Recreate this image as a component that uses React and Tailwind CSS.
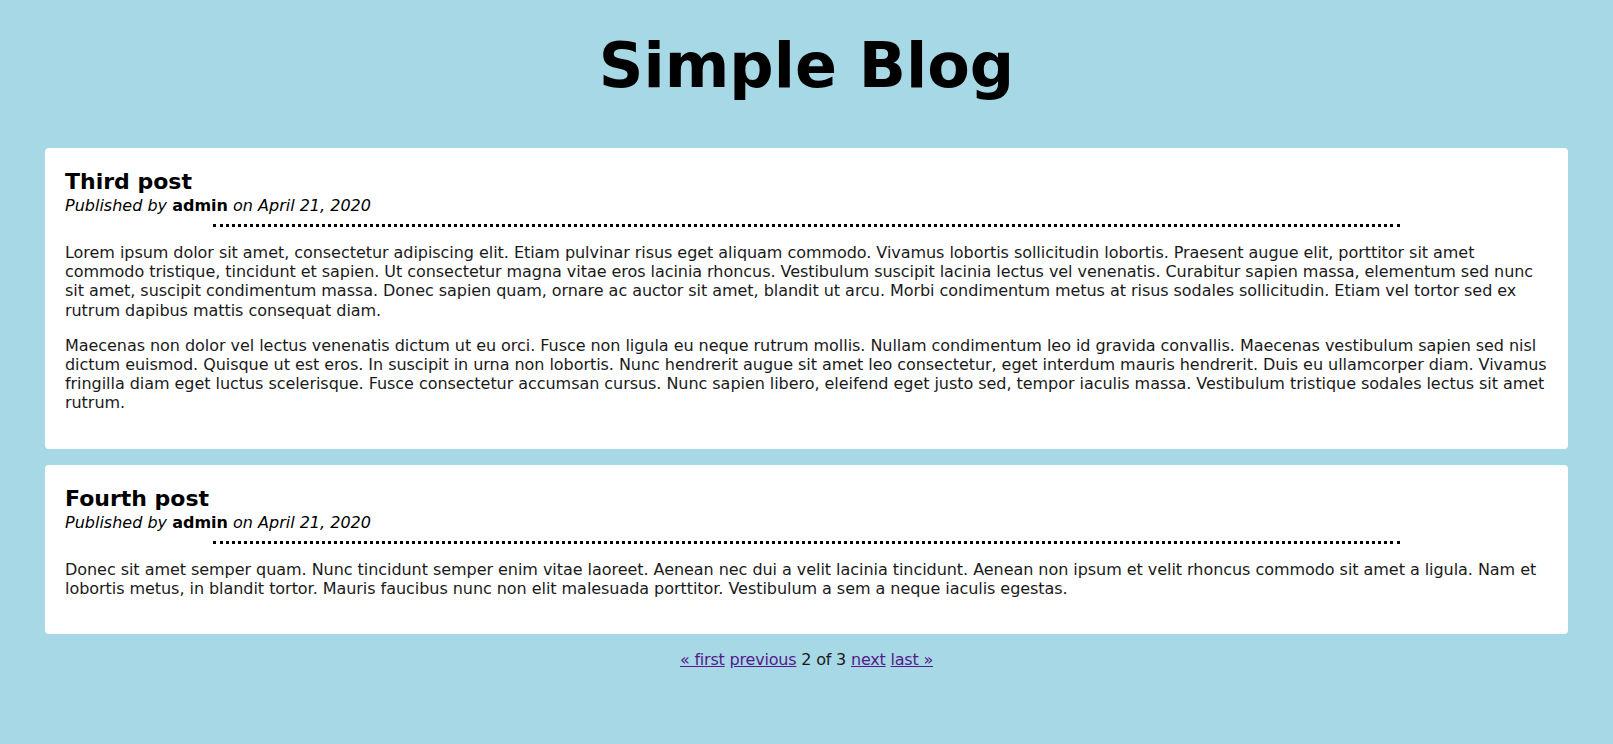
export default function App() {
    const posts = [
        {
            title: 'Third post',
            author: 'admin',
            date: 'April 21, 2020',
            body: [
                'Lorem ipsum dolor sit amet, consectetur adipiscing elit. Etiam pulvinar risus eget aliquam commodo. Vivamus lobortis sollicitudin lobortis. Praesent augue elit, porttitor sit amet commodo tristique, tincidunt et sapien. Ut consectetur magna vitae eros lacinia rhoncus. Vestibulum suscipit lacinia lectus vel venenatis. Curabitur sapien massa, elementum sed nunc sit amet, suscipit condimentum massa. Donec sapien quam, ornare ac auctor sit amet, blandit ut arcu. Morbi condimentum metus at risus sodales sollicitudin. Etiam vel tortor sed ex rutrum dapibus mattis consequat diam.',
                'Maecenas non dolor vel lectus venenatis dictum ut eu orci. Fusce non ligula eu neque rutrum mollis. Nullam condimentum leo id gravida convallis. Maecenas vestibulum sapien sed nisl dictum euismod. Quisque ut est eros. In suscipit in urna non lobortis. Nunc hendrerit augue sit amet leo consectetur, eget interdum mauris hendrerit. Duis eu ullamcorper diam. Vivamus fringilla diam eget luctus scelerisque. Fusce consectetur accumsan cursus. Nunc sapien libero, eleifend eget justo sed, tempor iaculis massa. Vestibulum tristique sodales lectus sit amet rutrum.',
            ],
        },
        {
            title: 'Fourth post',
            author: 'admin',
            date: 'April 21, 2020',
            body: [
                'Donec sit amet semper quam. Nunc tincidunt semper enim vitae laoreet. Aenean nec dui a velit lacinia tincidunt. Aenean non ipsum et velit rhoncus commodo sit amet a ligula. Nam et lobortis metus, in blandit tortor. Mauris faucibus nunc non elit malesuada porttitor. Vestibulum a sem a neque iaculis egestas.',
            ],
        },
    ];

    return (
        <div className="min-h-[744px] bg-[#a7d8e5] px-[45px] pb-10 text-black" style={{ fontFamily: '"DejaVu Sans", "Noto Sans", sans-serif' }}>
            <h1 className="pt-[22px] pb-[38px] text-center text-[62px] leading-[88px] font-semibold">Simple Blog</h1>

            <div className="flex flex-col gap-4">
                {posts.map((post) => (
                    <article key={post.title} className="rounded bg-white px-5 pt-[20px] pb-[36px]">
                        <h2 className="text-[22px] leading-[28px] font-semibold">{post.title}</h2>
                        <p className="text-base leading-[20px]">
                            <em>Published by</em> <span className="font-semibold">{post.author}</span> <em>on {post.date}</em>
                        </p>
                        <hr className="mx-auto mt-2 mb-4 w-4/5 border-0 border-t-[3px] border-dotted border-black" />
                        <div className="space-y-4 text-base leading-[19.2px] tracking-[-0.048px] text-[#1a1a1a]">
                            {post.body.map((para, i) => (
                                <p key={i}>{para}</p>
                            ))}
                        </div>
                    </article>
                ))}
            </div>

            <div className="mt-4 text-center text-base leading-[20px] tracking-[-0.2px] text-[#1a1a1a]">
                <a href="#" className="text-[#551a8b] underline">« first</a>{' '}
                <a href="#" className="text-[#551a8b] underline">previous</a>{' '}
                2 of 3{' '}
                <a href="#" className="text-[#551a8b] underline">next</a>{' '}
                <a href="#" className="text-[#551a8b] underline">last »</a>
            </div>
        </div>
    );
}
